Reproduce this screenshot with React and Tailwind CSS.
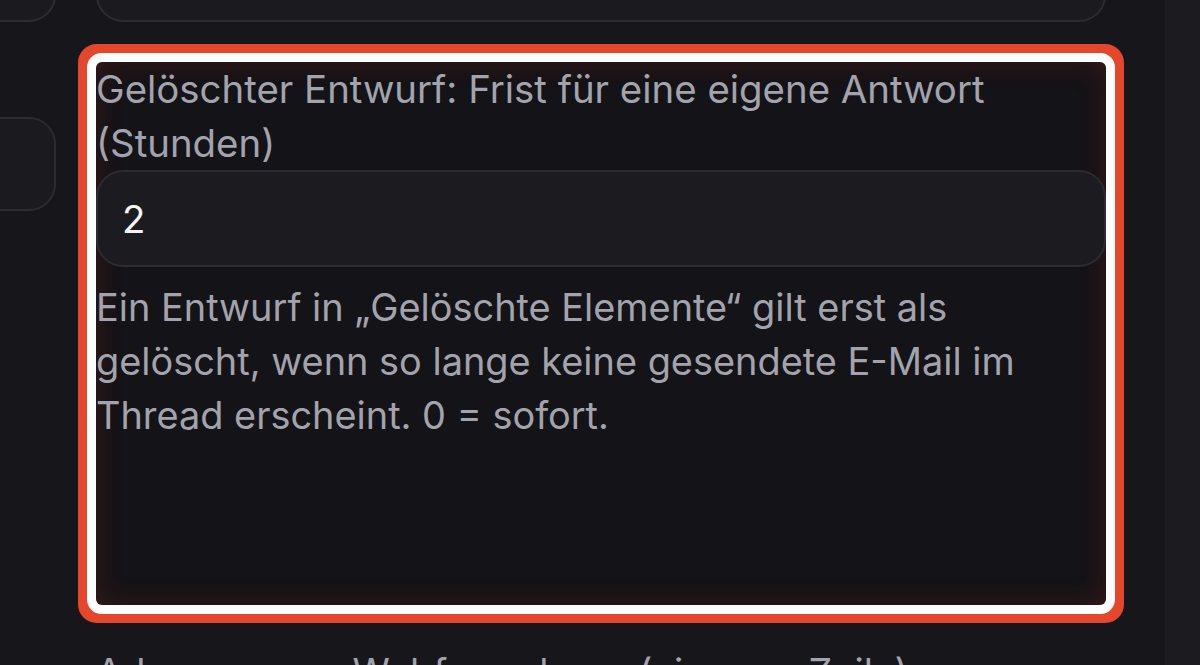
export default function App() {
  const font = { fontFamily: "Inter, 'Noto Sans', sans-serif" };
  return (
    <div
      className="w-[1200px] h-[665px] overflow-hidden bg-[#17161a] flex items-start text-[38.4px] leading-[54px]"
      style={font}
    >
      {/* left column (mostly off-screen) */}
      <div className="-ml-[80px] w-[136px] shrink-0 flex flex-col gap-[95px] -mt-[75px]">
        <div className="shrink-0 h-[97px] rounded-[27px] border-[2px] border-[#2c2b31] bg-[#1b1a1f]" />
        <div className="shrink-0 h-[94px] rounded-[27px] border-[2px] border-[#2c2b31] bg-[#1b1a1f]" />
      </div>

      {/* main column */}
      <div className="ml-[40px] w-[1010px] shrink-0 flex flex-col gap-[40px] -mt-[75px]">
        <div className="shrink-0 h-[97px] rounded-[27px] border-[2px] border-[#2c2b31] bg-[#1b1a1f]" />

        <div className="shrink-0 h-[543px] rounded-[6px] bg-[#141317] flex flex-col shadow-[inset_0_0_26px_rgba(150,40,25,0.3),0_0_0_9px_#ffffff,0_0_0_18px_#e4472b]">
          <label className="text-[#a3a3ad]">
            Gelöschter Entwurf: Frist für eine eigene Antwort (Stunden)
          </label>
          <div className="shrink-0 h-[97px] rounded-[27px] border-[2px] border-[#2c2b31] bg-[#1c1b20] flex items-center px-[24px] text-[#f4f4f5]">
            2
          </div>
          <p className="mt-[13px] text-[#a3a3ad] text-[37.9px] pr-[60px]">
            Ein Entwurf in „Gelöschte Elemente“ gilt erst als gelöscht, wenn so lange keine gesendete E-Mail im Thread erscheint. 0 = sofort.
          </p>
        </div>

        <div className="shrink-0 text-[#a3a3ad] text-[37.9px]">Adressen von Webformularen (eine pro Zeile)</div>
      </div>

      <div className="flex-1 self-stretch" />
      <div className="w-[35px] shrink-0 self-stretch h-[665px] bg-[#1c1c20]" />
    </div>
  );
}
